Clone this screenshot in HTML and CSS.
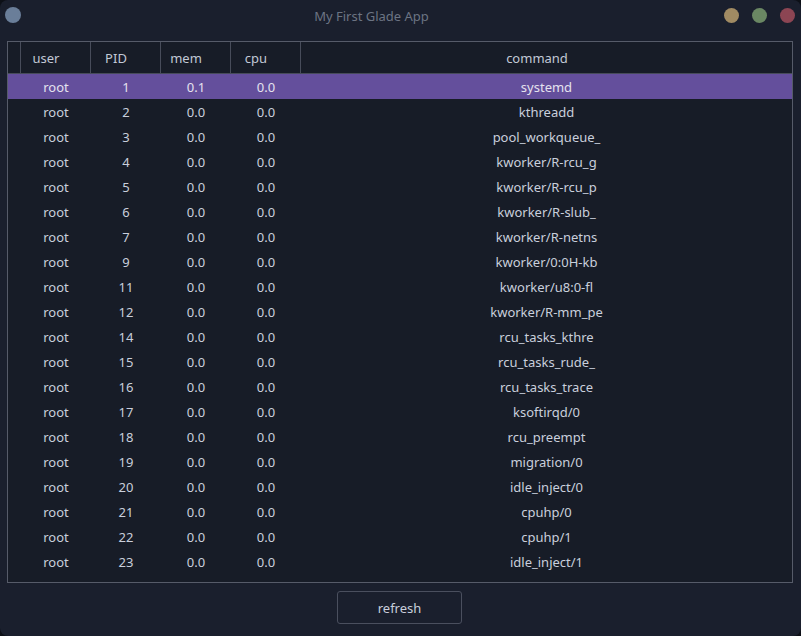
FILE: index.html
```html
<!DOCTYPE html>
<html>
<head>
<meta charset="utf-8">
<link rel="stylesheet" href="styles.css">
</head>
<body>
<div class="window">
  <div class="titlebar">
    <span class="dot dot-menu"></span>
    <div class="title">My First Glade App</div>
    <div class="controls">
      <span class="dot dot-min"></span>
      <span class="dot dot-max"></span>
      <span class="dot dot-close"></span>
    </div>
  </div>
  <div class="content">
    <div class="tree">
      <div class="head">
        <div class="hcell first"></div>
        <div class="hcell">user</div>
        <div class="hcell">PID</div>
        <div class="hcell">mem</div>
        <div class="hcell">cpu</div>
        <div class="hcell last">command</div>
      </div>
      <div class="rows" id="rows"></div>
    </div>
    <div class="actions">
      <button class="btn">refresh</button>
    </div>
  </div>
</div>
<script src="app.js"></script>
</body>
</html>
```
FILE: app.js
```js
var data = [
  ["root","1","0.1","0.0","systemd"],
  ["root","2","0.0","0.0","kthreadd"],
  ["root","3","0.0","0.0","pool_workqueue_"],
  ["root","4","0.0","0.0","kworker/R-rcu_g"],
  ["root","5","0.0","0.0","kworker/R-rcu_p"],
  ["root","6","0.0","0.0","kworker/R-slub_"],
  ["root","7","0.0","0.0","kworker/R-netns"],
  ["root","9","0.0","0.0","kworker/0:0H-kb"],
  ["root","11","0.0","0.0","kworker/u8:0-fl"],
  ["root","12","0.0","0.0","kworker/R-mm_pe"],
  ["root","14","0.0","0.0","rcu_tasks_kthre"],
  ["root","15","0.0","0.0","rcu_tasks_rude_"],
  ["root","16","0.0","0.0","rcu_tasks_trace"],
  ["root","17","0.0","0.0","ksoftirqd/0"],
  ["root","18","0.0","0.0","rcu_preempt"],
  ["root","19","0.0","0.0","migration/0"],
  ["root","20","0.0","0.0","idle_inject/0"],
  ["root","21","0.0","0.0","cpuhp/0"],
  ["root","22","0.0","0.0","cpuhp/1"],
  ["root","23","0.0","0.0","idle_inject/1"]
];
var rows = document.getElementById("rows");
data.forEach(function (r, i) {
  var row = document.createElement("div");
  row.className = "row" + (i === 0 ? " selected" : "");
  var pad = document.createElement("div");
  row.appendChild(pad);
  r.forEach(function (v) {
    var c = document.createElement("div");
    c.className = "cell";
    c.textContent = v;
    row.appendChild(c);
  });
  rows.appendChild(row);
});
```
FILE: styles.css
```css
html, body {
  margin: 0;
  padding: 0;
  background: #0d1017;
}
body {
  width: 801px;
  height: 636px;
  font-family: "Noto Sans", "Open Sans", sans-serif;
  font-size: 13px;
}
.window {
  width: 801px;
  height: 636px;
  background: #1a1f2d;
  border-radius: 8px;
  display: flex;
  flex-direction: column;
  overflow: hidden;
}
.titlebar {
  height: 34px;
  flex: none;
  display: flex;
  align-items: center;
  padding: 0 6px 0 5px;
  box-sizing: border-box;
}
.dot {
  display: block;
  width: 15px;
  height: 15px;
  border-radius: 50%;
  margin-top: -4px;
}
.dot-menu { background: #6a7e99; width: 16px; height: 16px; }
.dot-min { background: #a18b63; }
.dot-max { background: #6a8763; }
.dot-close { background: #8c4553; }
.controls {
  display: flex;
  gap: 13px;
}
.title {
  flex: 1;
  text-align: center;
  color: #6c7483;
  margin-top: -3px;
  padding-right: 2px;
}
.content {
  flex: 1;
  display: flex;
  flex-direction: column;
  padding: 7px 8px 12px 7px;
  gap: 8px;
  min-height: 0;
}
.tree {
  flex: 1;
  border: 1px solid #565b69;
  background: #171c27;
  color: #c9cfdc;
  overflow: hidden;
}
.head, .row {
  display: grid;
  grid-template-columns: 13px 70px 70px 70px 70px minmax(0, 1fr);
}
.head {
  height: 32px;
  border-bottom: 1px solid #474c5a;
  box-sizing: border-box;
}
.hcell {
  border-right: 1px solid #474c5a;
  padding: 2px 19px 0 0;
  text-align: center;
  line-height: 29px;
  color: #c2c9d6;
  min-width: 0;
}
.hcell.first {
  padding: 0;
}
.hcell.last {
  border-right: none;
}
.row {
  height: 25px;
  line-height: 24px;
}
.cell {
  padding-top: 1px;
  text-align: center;
  white-space: nowrap;
}
.row.selected {
  background: #644f9c;
  color: #e4e2ef;
}
.actions {
  display: flex;
  justify-content: center;
  flex: none;
}
.btn {
  width: 125px;
  height: 33px;
  background: #1a1f2d;
  border: 1px solid #4a4f5e;
  border-radius: 3px;
  color: #c9cfdc;
  font-family: "Noto Sans", "Open Sans", sans-serif;
  font-size: 13px;
  padding: 0;
  margin-left: -1px;
}
```
